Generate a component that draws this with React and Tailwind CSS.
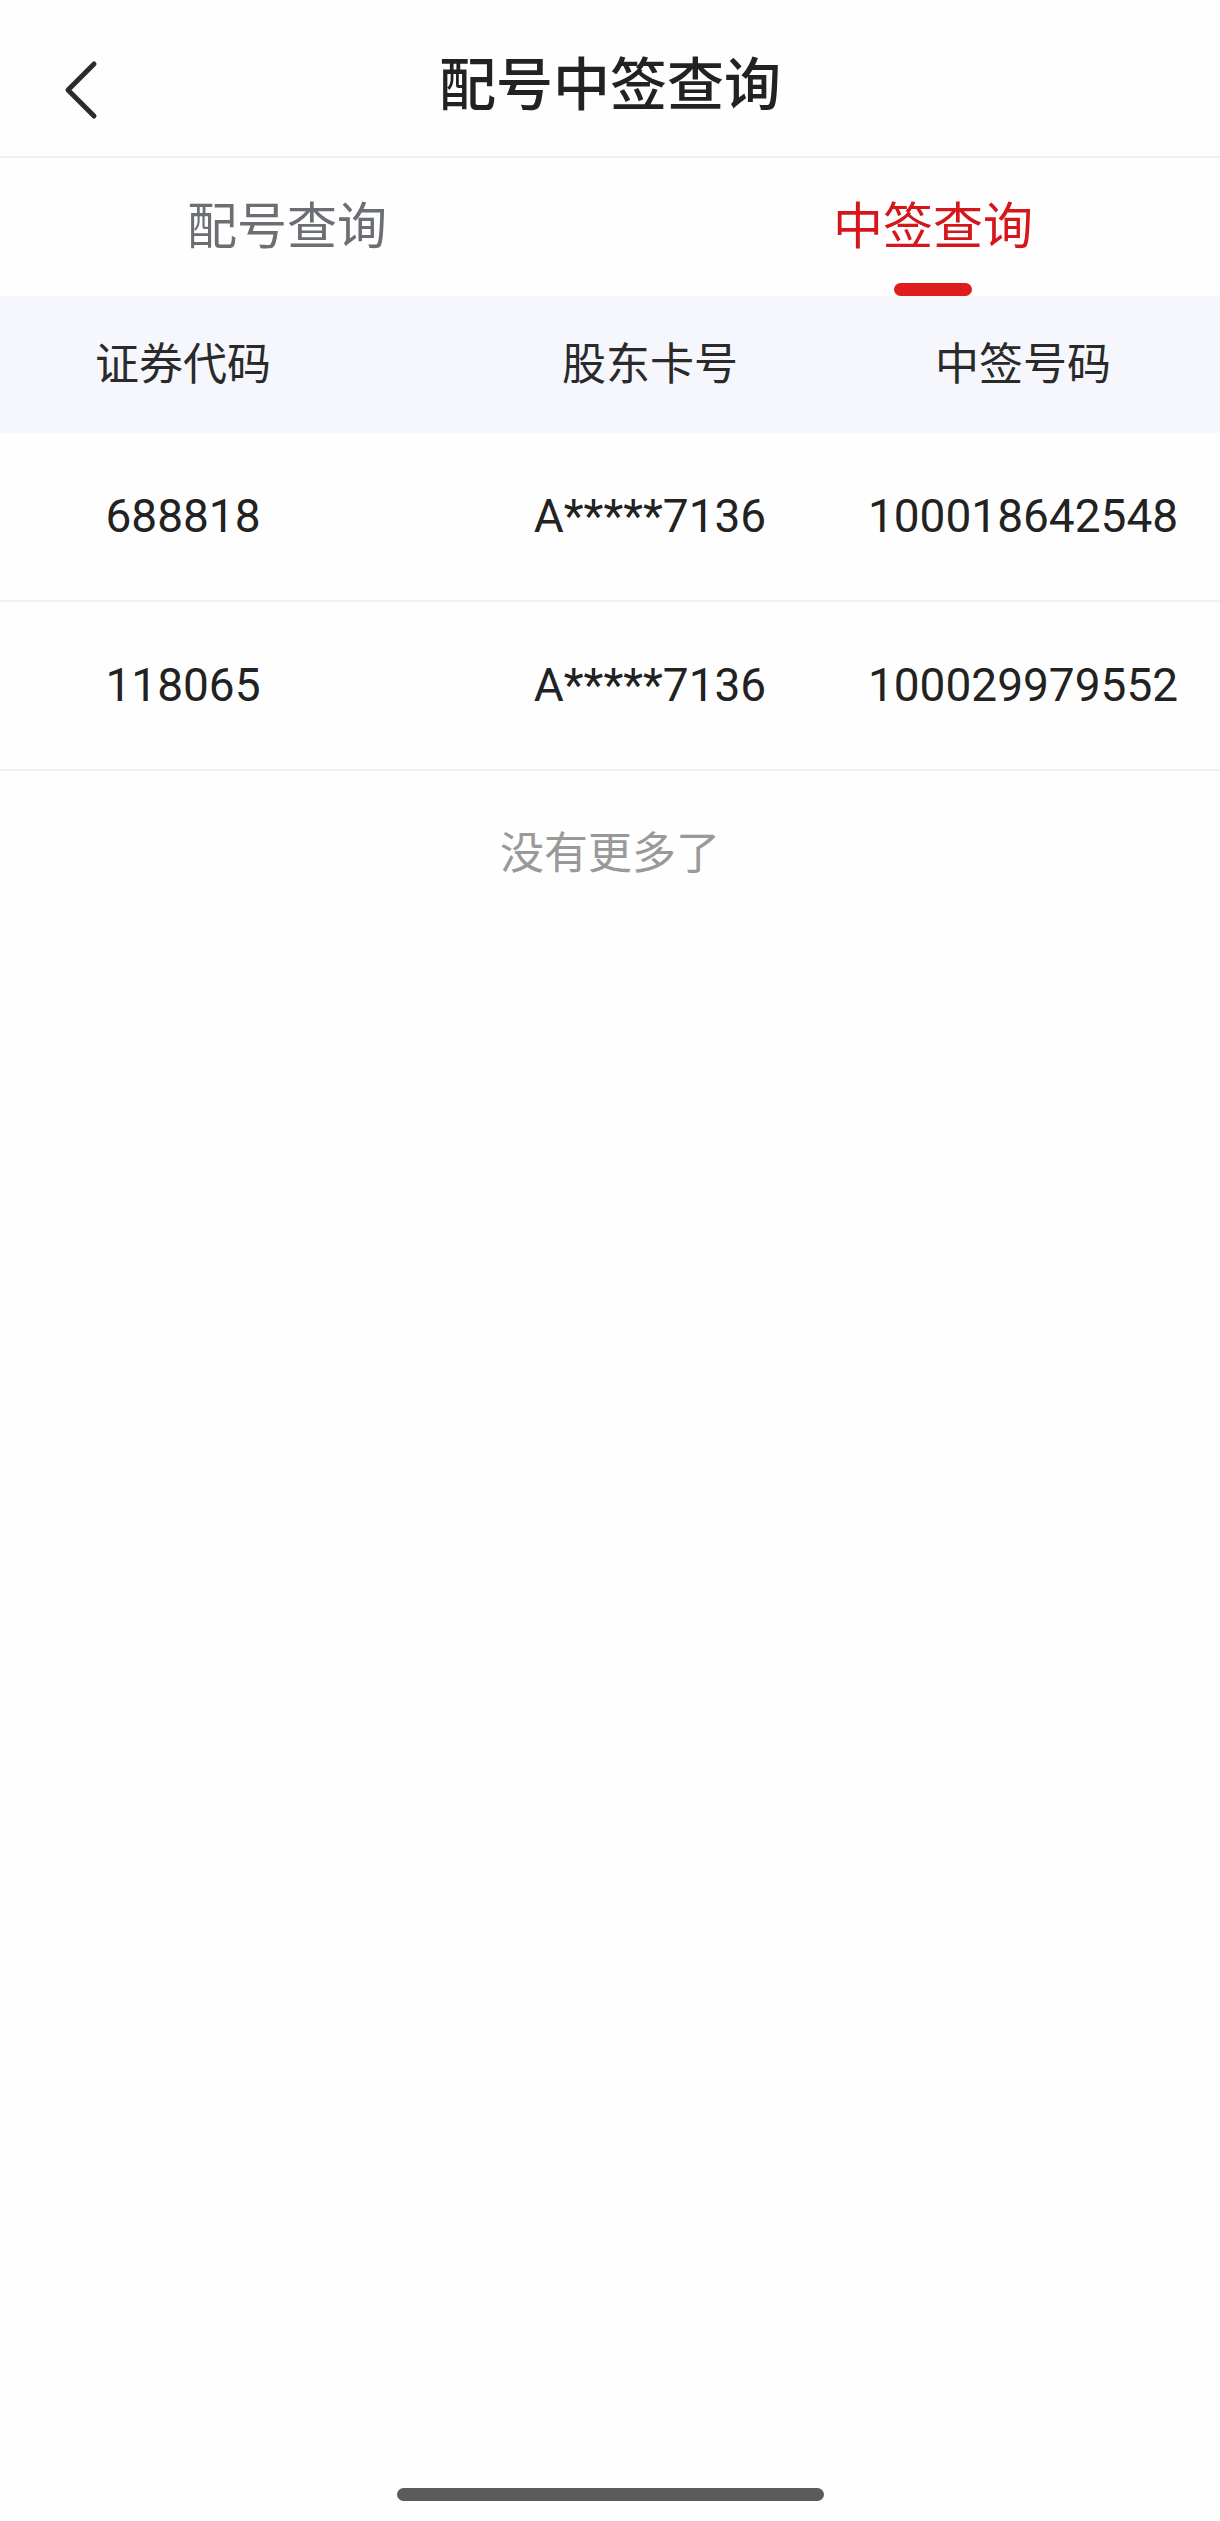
import React from 'react'

const rows = [
  { code: '688818', card: 'A*****7136', number: '100018642548' },
  { code: '118065', card: 'A*****7136', number: '100029979552' },
]

// Three text-centred columns, placed to line up with the reference table
function Cells({ a, b, c, className }) {
  return (
    <div className={`flex items-center ${className}`}>
      <div className="w-[366px] text-center">{a}</div>
      <div className="ml-[84px] w-[400px] text-center">{b}</div>
      <div className="w-[346px] text-center">{c}</div>
    </div>
  )
}

export default function App() {
  return (
    <div
      className="min-h-[2521px] bg-[#fefefe] flex flex-col"
      style={{ fontFamily: 'Roboto, "Noto Sans CJK SC", sans-serif' }}
    >
      {/* Top bar */}
      <div className="relative h-[158px] flex items-center justify-center border-b-2 border-[#efefef] pt-[14px]">
        <button className="absolute left-[56px] top-[56px] p-1">
          <svg width="40" height="60" viewBox="0 0 40 60" fill="none">
            <polyline points="34,4 8,30 34,56" stroke="#2b2b2b" strokeWidth="5" strokeLinecap="round" strokeLinejoin="round" />
          </svg>
        </button>
        <h1 className="text-[57px] font-medium text-[#222] leading-none">配号中签查询</h1>
      </div>

      {/* Tabs */}
      <div className="h-[138px] flex justify-between px-[187px]">
        <div className="flex flex-col items-center pt-[44px]">
          <span className="text-[50px] text-[#6b6e72] leading-none">配号查询</span>
        </div>
        <div className="flex flex-col items-center pt-[44px]">
          <span className="text-[50px] text-[#d5161b] leading-none">中签查询</span>
          <span className="mt-auto w-[78px] h-[13px] rounded-full bg-[#e01b1b]" />
        </div>
      </div>

      {/* Table header */}
      <Cells
        className="h-[137px] bg-[#f6f7fd] text-[44px] text-[#2a2a2a]"
        a="证券代码"
        b="股东卡号"
        c="中签号码"
      />

      {/* Rows */}
      {rows.map(r => (
        <Cells
          key={r.code}
          className="h-[169px] border-b-2 border-[#f2f0f0] text-[46px] text-[#222]"
          a={r.code}
          b={r.card}
          c={r.number}
        />
      ))}

      <p className="mt-[50px] text-center text-[44px] text-[#999]">没有更多了</p>

      {/* Home indicator */}
      <div className="mt-auto mb-[20px] flex justify-center">
        <span className="w-[427px] h-[13px] rounded-full bg-[#5b5b5b]" />
      </div>
    </div>
  )
}
